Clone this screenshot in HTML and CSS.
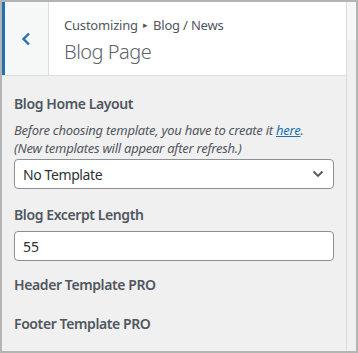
FILE: index.html
```html
<!DOCTYPE html>
<html lang="en">
<head>
  <meta charset="UTF-8">
  <title>Blog Page</title>
  <link rel="stylesheet" href="styles.css">
</head>
<body>

<div class="frame">
  <div class="panel">
    <div class="panel-header">
      <button type="button" class="back-button" aria-label="Back">
        <svg width="10" height="14" viewBox="0 0 10 14"><path d="M8 1.5 L2.5 7 L8 12.5" fill="none" stroke="#2271b1" stroke-width="2.4"/></svg>
      </button>
      <div class="panel-title">
        <span class="breadcrumb">Customizing <span class="sep">&#9656;</span> Blog / News</span>
        <h2>Blog Page</h2>
      </div>
    </div>

    <div class="panel-body">
      <div class="control layout">
        <label class="control-title" for="layout">Blog Home Layout</label>
        <p class="description">Before choosing template, you have to create it <a href="#">here</a>.<br>(New templates will appear after refresh.)</p>
        <div class="select-wrap">
          <select id="layout">
            <option>No Template</option>
          </select>
          <svg class="select-arrow" width="12" height="8" viewBox="0 0 12 8"><path d="M1.5 1.5 L6 6 L10.5 1.5" fill="none" stroke="#50575e" stroke-width="1.8"/></svg>
        </div>
      </div>

      <div class="control">
        <label class="control-title" for="excerpt">Blog Excerpt Length</label>
        <input type="text" id="excerpt" value="55" />
      </div>

      <div class="control pro">
        <span class="control-title">Header Template PRO</span>
      </div>

      <div class="control pro">
        <span class="control-title">Footer Template PRO</span>
      </div>
    </div>
  </div>
  <div class="scrollbar"><div class="thumb"></div></div>
</div>

</body>
</html>
```

FILE: styles.css
```css
body {
  margin: 0;
  font-family: 'Noto Sans', 'Open Sans', sans-serif;
  color: #50575e;
}
.frame {
  width: 358px;
  height: 353px;
  box-sizing: border-box;
  border: 2px solid #b4b4b4;
  background-color: #f0f0f0;
  display: flex;
  overflow: hidden;
}
.panel {
  width: 344px;
  border-right: 1px solid #dcdcde;
  flex-shrink: 0;
}
.scrollbar {
  flex: 1;
  background-color: #f0f0f0;
}
.thumb {
  height: 38px;
  background-color: #f6f7f7;
}
.panel-header {
  display: flex;
  height: 73px;
  background-color: #ffffff;
  border-bottom: 1px solid #dcdcde;
}
.back-button {
  width: 47px;
  padding: 0;
  border: none;
  border-left: 3px solid #2271b1;
  border-right: 1px solid #dcdcde;
  background-color: #f6f7f7;
  display: flex;
  align-items: center;
  justify-content: center;
  padding-right: 2px;
}
.panel-title {
  padding: 13px 0 0 15px;
}
.breadcrumb {
  display: block;
  font-size: 13px;
  line-height: 20px;
  letter-spacing: -0.2px;
  color: #50575e;
}
.breadcrumb .sep {
  font-size: 9px;
  vertical-align: 2px;
  margin: 0 2px;
}
.panel-title h2 {
  margin: 4px 0 0;
  font-size: 20px;
  font-weight: 300;
  line-height: 26px;
  letter-spacing: -0.5px;
  color: #5c636a;
}
.panel-body {
  padding: 18px 12px 0 12px;
}
.control {
  margin-bottom: 14px;
}
.control.layout {
  margin-bottom: 16px;
}
.control.pro {
  margin-bottom: 19px;
}
.control-title {
  display: block;
  font-size: 14px;
  font-weight: 600;
  line-height: 20px;
  letter-spacing: -0.4px;
  color: #50575e;
}
.description {
  margin: 7px 0 2px;
  font-size: 13px;
  font-style: italic;
  line-height: 18px;
  letter-spacing: -0.25px;
  color: #50575e;
}
.description a {
  color: #2271b1;
}
.select-wrap {
  position: relative;
}
select {
  appearance: none;
  width: 100%;
  height: 30px;
  padding: 0 8px;
  border: 1px solid #8c8f94;
  border-radius: 4px;
  background-color: #ffffff;
  font-family: inherit;
  font-size: 14px;
  letter-spacing: -0.4px;
  color: #2c3338;
}
.select-arrow {
  position: absolute;
  right: 10px;
  top: 11px;
}
input {
  display: block;
  width: 100%;
  box-sizing: border-box;
  height: 30px;
  margin-top: 6px;
  padding: 0 8px;
  border: 1px solid #8c8f94;
  border-radius: 4px;
  font-family: inherit;
  font-size: 14px;
  color: #2c3338;
}
```
